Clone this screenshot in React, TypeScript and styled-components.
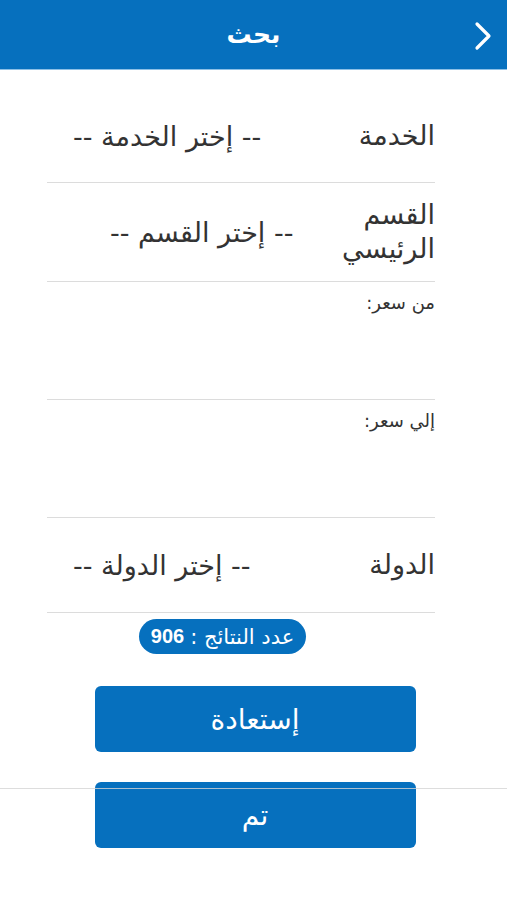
import React from 'react';
import styled, { createGlobalStyle } from 'styled-components';

const blue = '#0670be';

const GlobalStyle = createGlobalStyle`
  html, body {
    margin: 0;
    padding: 0;
    background: #fff;
  }
  body {
    font-family: "DejaVu Sans", "Noto Sans", sans-serif;
    direction: rtl;
  }
`;

const Page = styled.div`
  position: relative;
  width: 507px;
  height: 900px;
  background: #fff;
  overflow: hidden;
`;

const Header = styled.header`
  position: relative;
  height: 69px;
  background: ${blue};
  border-bottom: 1px solid #8cc0e6;
  display: flex;
  align-items: center;
  justify-content: center;
`;

const Title = styled.h1`
  margin: 0;
  color: #fff;
  font-size: 25px;
  font-weight: bold;
`;

const BackButton = styled.div`
  position: absolute;
  right: 14px;
  top: 21px;
  width: 20px;
  height: 30px;
`;

const Form = styled.div`
  margin: 0 72px 0 47px;
  padding-top: 20px;
`;

const SelectRow = styled.div<{ $h: number }>`
  height: ${(p) => p.$h}px;
  border-bottom: 1px solid #dcdcdc;
  display: flex;
  align-items: center;
`;

const Label = styled.div`
  width: 92px;
  font-size: 27px;
  line-height: 34px;
  color: #333;
  text-align: right;
`;

const Value = styled.div<{ $inset?: number }>`
  flex: 1;
  text-align: left;
  padding-left: ${(p) => 26 + (p.$inset || 0)}px;
  font-size: 27px;
  color: #333;
  white-space: nowrap;
`;

const InputRow = styled.div`
  height: 118px;
  border-bottom: 1px solid #dcdcdc;
  padding-top: 10px;
  box-sizing: border-box;
`;

const SmallLabel = styled.div`
  font-size: 18px;
  color: #333;
`;

const Count = styled.div`
  display: flex;
  justify-content: center;
  margin-top: 6px;
  margin-right: 62px;
`;

const Badge = styled.div`
  background: ${blue};
  color: #fff;
  border-radius: 18px;
  height: 35px;
  padding: 0 12px;
  display: flex;
  align-items: center;
  gap: 6px;
  font-size: 21px;

  b {
    font-family: "Liberation Sans", sans-serif;
    font-weight: bold;
    font-size: 20px;
  }
`;

const Actions = styled.div`
  display: flex;
  flex-direction: column;
  align-items: center;
  gap: 30px;
  margin-top: 32px;
  margin-left: 3px;
`;

const Button = styled.button`
  width: 321px;
  height: 66px;
  border: none;
  border-radius: 6px;
  background: ${blue};
  color: #fff;
  font-family: inherit;
  font-size: 28px;
`;

const Rule = styled.div`
  position: absolute;
  left: 0;
  right: 0;
  top: 788px;
  height: 1px;
  background: #d4d4d4;
  opacity: 0.8;
`;

export default function App() {
  return (
    <Page>
      <GlobalStyle />
      <Header>
        <Title>بحث</Title>
        <BackButton>
          <svg width="20" height="30" viewBox="0 0 20 30">
            <path d="M4 3 L16 15 L4 27" fill="none" stroke="#fff" strokeWidth="3.2" strokeLinecap="round" strokeLinejoin="round" />
          </svg>
        </BackButton>
      </Header>
      <Form>
        <SelectRow $h={92}>
          <Label>الخدمة</Label>
          <Value>-- إختر الخدمة --</Value>
        </SelectRow>
        <SelectRow $h={98}>
          <Label>القسم الرئيسي</Label>
          <Value $inset={37}>-- إختر القسم --</Value>
        </SelectRow>
        <InputRow>
          <SmallLabel>من سعر:</SmallLabel>
        </InputRow>
        <InputRow>
          <SmallLabel>إلي سعر:</SmallLabel>
        </InputRow>
        <SelectRow $h={94}>
          <Label>الدولة</Label>
          <Value>-- إختر الدولة --</Value>
        </SelectRow>
      </Form>
      <Count>
        <Badge>
          <span>عدد النتائج :</span>
          <b>906</b>
        </Badge>
      </Count>
      <Actions>
        <Button>إستعادة</Button>
        <Button>تم</Button>
      </Actions>
      <Rule />
    </Page>
  );
}
